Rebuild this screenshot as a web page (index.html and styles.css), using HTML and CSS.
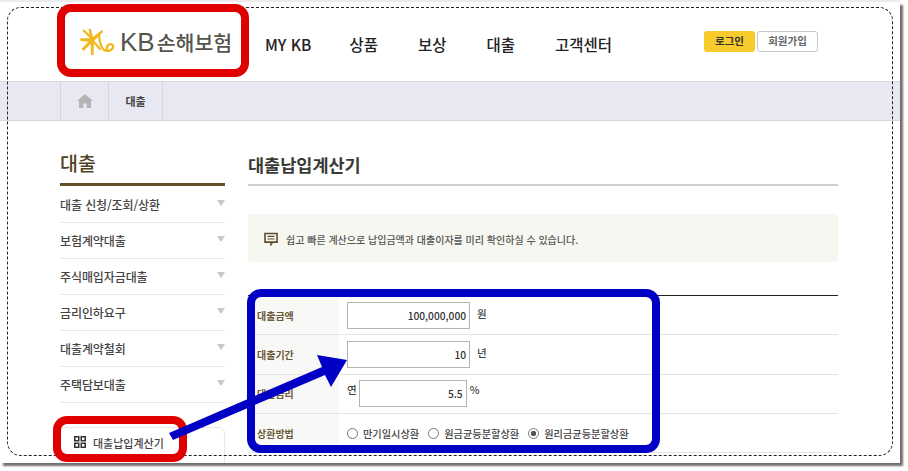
FILE: index.html
```html
<!DOCTYPE html>
<html lang="ko">
<head>
<meta charset="utf-8">
<title>대출납입계산기</title>
<link rel="stylesheet" href="styles.css">
</head>
<body>
<div class="shot">
  <header class="header">
    <a class="logo">
      <svg class="logo-mark" viewBox="0 0 36 28" width="36" height="28" aria-hidden="true">
        <g fill="#f0b91e">
          <polygon points="12,10 0,10.5 0.5,13 12,14"/>
          <polygon points="11,11 2,2.5 4,1.5 13.5,10"/>
          <polygon points="10.5,12 8.5,1 11,1 13.5,12"/>
          <polygon points="11,11 1.5,21 3.5,23 13.5,13"/>
          <polygon points="10.5,12 11,27 13.5,27 14,12"/>
          <polygon points="11,10.5 22,2 23,4 13,14"/>
        </g>
        <path fill="none" stroke="#f0b91e" stroke-width="2.2" stroke-linecap="round" d="M12 12 L20 21 M19 7 C19.5 15 22 23 27 23 C32 23 35 18.5 32 16.5 C29 15 26 18 27 23"/>
      </svg>
      <span class="logo-kb">KB</span><span class="logo-name">손해보험</span>
    </a>
    <nav class="nav">
      <a>MY KB</a><a>상품</a><a>보상</a><a>대출</a><a>고객센터</a>
    </nav>
    <div class="auth">
      <a class="btn btn-login">로그인</a><a class="btn btn-join">회원가입</a>
    </div>
  </header>
  <div class="crumbs">
    <a class="crumb crumb-home">
      <svg viewBox="0 0 16 14" width="16" height="14" aria-hidden="true"><path fill="#b4b4b4" d="M8 0 L16 7 L14 7 L14 14 L9.7 14 L9.7 9.5 L6.3 9.5 L6.3 14 L2 14 L2 7 L0 7 Z"/></svg>
    </a>
    <a class="crumb crumb-text">대출</a>
  </div>
  <main class="main">
    <aside class="side">
      <h2 class="side-title">대출</h2>
      <ul class="side-list">
        <li>대출 신청/조회/상환<i class="caret"></i></li>
        <li>보험계약대출<i class="caret"></i></li>
        <li>주식매입자금대출<i class="caret"></i></li>
        <li>금리인하요구<i class="caret"></i></li>
        <li>대출계약철회<i class="caret"></i></li>
        <li>주택담보대출<i class="caret"></i></li>
      </ul>
      <div class="side-tool">
        <svg viewBox="0 0 12 12" width="12" height="12" aria-hidden="true">
          <g fill="#333">
            <path d="M0 0h5.5v5.5H0z M1.5 1.5v2.5h2.5V1.5z" fill-rule="evenodd"/>
            <path d="M0 6.5h5.5V12H0z M1.5 8v2.5h2.5V8z" fill-rule="evenodd"/>
            <path d="M6.5 0H12v5.5H6.5z M8 1.5v2.5h2.5V1.5z" fill-rule="evenodd"/>
            <path d="M6.5 6.5H12V12H6.5z M8 8v2.5h2.5V8z" fill-rule="evenodd"/>
          </g>
        </svg>
        <span>대출납입계산기</span>
      </div>
    </aside>
    <section class="content">
      <h1 class="page-title">대출납입계산기</h1>
      <div class="notice">
        <svg viewBox="0 0 14 14" width="14" height="14" aria-hidden="true">
          <path fill="none" stroke="#5d4d2b" stroke-width="1.6" d="M1 1.5h12v8.6H8.6L7 12.4V10.1H1z"/>
          <path fill="none" stroke="#5d4d2b" stroke-width="1.2" d="M3.5 4.4h7M3.5 7h7"/>
        </svg>
        <span>쉽고 빠른 계산으로 납입금액과 대출이자를 미리 확인하실 수 있습니다.</span>
      </div>
      <div class="form">
        <div class="row">
          <div class="label">대출금액</div>
          <div class="field"><span class="input">100,000,000</span><span class="unit">원</span></div>
        </div>
        <div class="row">
          <div class="label">대출기간</div>
          <div class="field"><span class="input">10</span><span class="unit">년</span></div>
        </div>
        <div class="row">
          <div class="label">대출금리</div>
          <div class="field field-rate"><span class="unit-pre">연</span><span class="input input-rate">5.5</span><span class="unit-post">%</span></div>
        </div>
        <div class="row">
          <div class="label">상환방법</div>
          <div class="field field-radio">
            <span class="radio"><i class="dot"></i>만기일시상환</span>
            <span class="radio"><i class="dot"></i>원금균등분할상환</span>
            <span class="radio"><i class="dot dot-on"></i>원리금균등분할상환</span>
          </div>
        </div>
      </div>
    </section>
  </main>
</div>
<div class="frame"></div>
<div class="mark mark-logo"></div>
<div class="mark mark-tool"></div>
<div class="mark mark-form"></div>
<svg class="arrow" viewBox="0 0 908 471" width="908" height="471" aria-hidden="true">
  <polygon fill="#0000c4" points="169,433 173,440 325,375 331,387 347,360 317,355 322,367"/>
</svg>
</body>
</html>
```

FILE: styles.css
```css
* { box-sizing: border-box; }
html, body { margin: 0; padding: 0; background: #fff; }
body {
  width: 908px;
  height: 471px;
  overflow: hidden;
  position: relative;
  font-family: "Noto Sans CJK KR", "Noto Sans", sans-serif;
  color: #333;
}
a { color: inherit; text-decoration: none; }
ul { list-style: none; margin: 0; padding: 0; }
h1, h2 { margin: 0; }

.shot {
  width: 900px;
  height: 461px;
  margin-top: 2px;
  background: #fff;
  overflow: hidden;
  box-shadow: 3px 3px 2px #6f6f6f, 0 -2px 0 #ececec;
}

/* header */
.header {
  height: 80px;
  display: flex;
  align-items: center;
  padding-left: 80px;
  border-bottom: 1px solid #d8d8dc;
}
.logo {
  width: 185px;
  display: flex;
  align-items: center;
  color: #55554e;
}
.logo-mark { margin-right: 4px; }
.logo-kb {
  font-family: "Liberation Sans", sans-serif;
  font-size: 26px;
  line-height: 30px;
  margin-right: 2px;
}
.logo-name { font-size: 20.5px; line-height: 30px; font-weight: 500; }
.nav {
  display: flex;
  color: #222;
  font-size: 15.5px;
  font-weight: 500;
  gap: 40px;
  width: 439px;
  padding-top: 4px;
}
.nav a { line-height: 20px; }
.nav a:first-child { margin-right: -2px; }
.auth { display: flex; gap: 2px; }
.btn {
  height: 21px;
  border-radius: 3px;
  font-size: 10.5px;
  font-weight: 700;
  line-height: 20px;
  text-align: center;
}
.btn-login { width: 51px; background: #f6cb2b; color: #333; }
.btn-join { width: 61px; background: #fff; border: 1px solid #c8c8c8; color: #666; line-height: 18px; }

/* crumbs */
.crumbs {
  height: 39px;
  display: flex;
  padding-left: 60px;
  background: #e8e8f3;
  border-bottom: 1px solid #d8d8dc;
}
.crumb {
  display: flex;
  align-items: center;
  justify-content: center;
  border-left: 1px solid #d6d6de;
  font-size: 11px;
  font-weight: 700;
  color: #444;
}
.crumb-home { width: 48px; }
.crumb-text { width: 55px; border-right: 1px solid #d6d6de; }

/* layout */
.main {
  display: flex;
  padding-left: 60px;
  gap: 23px;
}
.side { width: 165px; padding-top: 30px; }
.side-title {
  font-size: 19.5px;
  font-weight: 500;
  line-height: 24px;
  color: #4f4325;
  height: 35px;
  border-bottom: 3px solid #63502a;
}
.side-list { padding-top: 1px; }
.side-list li {
  height: 36px;
  display: flex;
  align-items: center;
  justify-content: space-between;
  border-bottom: 1px solid #e6e6e6;
  font-size: 12px;
  font-weight: 500;
  letter-spacing: -.1px;
  color: #444;
}
.caret {
  width: 0;
  height: 0;
  margin: -4px 0 0;
  border: 4.5px solid transparent;
  border-top: 6px solid #c8c8c8;
  border-bottom: 0;
}
.side-tool {
  margin-top: 24px;
  height: 60px;
  padding: 8px 0 0 13px;
  display: flex;
  align-items: flex-start;
  gap: 7px;
  border: 1px solid #e6e6e6;
  border-radius: 6px;
  font-size: 11px;
  font-weight: 500;
  color: #444;
}
.side-tool span { line-height: 14px; }

.content { width: 590px; padding-top: 30px; }
.page-title {
  height: 35px;
  font-size: 17.5px;
  font-weight: 700;
  line-height: 28px;
  color: #3a3a36;
  border-bottom: 2px solid #cfcfca;
}
.notice {
  margin-top: 28px;
  height: 48px;
  display: flex;
  align-items: center;
  gap: 8px;
  padding: 2px 0 0 16px;
  background: #f7f7f2;
  border-radius: 2px;
  font-size: 10px;
  font-weight: 500;
  color: #555;
}
.form { margin-top: 33px; border-top: 1px solid #222; }
.row {
  height: 39.3px;
  display: flex;
  border-bottom: 1px solid #e4e4e4;
}
.label {
  width: 91px;
  padding-left: 9px;
  display: flex;
  align-items: center;
  background: #f8f8f6;
  font-size: 10px;
  font-weight: 700;
  color: #6b5a38;
}
.field {
  display: flex;
  align-items: center;
  padding-left: 8px;
  font-size: 10.5px;
  font-weight: 500;
  color: #444;
}
.input {
  width: 123px;
  height: 27px;
  padding-right: 3px;
  display: flex;
  align-items: center;
  justify-content: flex-end;
  border: 1px solid #b4b4b4;
  background: #fff;
  font-size: 10.2px;
  color: #333;
}
.unit { margin: -4px 0 0 7px; }
.unit-pre { margin: -8px 2px 0 0; }
.unit-post { margin: -8px 0 0 3px; }
.input-rate { width: 108px; }
.field-radio { gap: 9px; font-size: 10.2px; }
.radio { display: flex; align-items: center; gap: 5px; }
.dot {
  width: 11px;
  height: 11px;
  border: 1px solid #777;
  border-radius: 50%;
  background: #fff;
}
.dot-on { background: radial-gradient(circle, #555 0 2.5px, #fff 3px); }

/* annotations drawn over the capture */
.frame {
  position: absolute;
  left: 7px;
  top: 7px;
  width: 886px;
  height: 449px;
  border: 1px dashed #222;
  border-radius: 14px;
  pointer-events: none;
}
.mark { position: absolute; border-style: solid; pointer-events: none; }
.mark-logo { left: 57px; top: 4px; width: 192px; height: 73px; border: 8px solid #e00000; border-radius: 14px; }
.mark-tool { left: 53px; top: 416px; width: 134px; height: 46px; border: 8px solid #e00000; border-radius: 14px; }
.mark-form { left: 247px; top: 289px; width: 413px; height: 164px; border: 8.5px solid #0000c4; border-radius: 14px; }
.arrow { position: absolute; left: 0; top: 0; pointer-events: none; }
```
